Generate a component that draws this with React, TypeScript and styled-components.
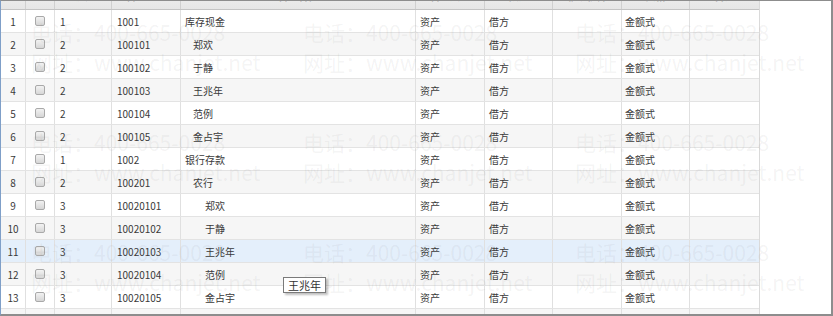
import React from 'react';
import styled, { createGlobalStyle } from 'styled-components';

const GlobalStyle = createGlobalStyle`
  html, body {
    margin: 0;
    padding: 0;
    background: #ffffff;
  }
  body {
    font-family: 'Noto Sans CJK SC', 'Liberation Sans', sans-serif;
  }
`;

/* column widths of the grid, left to right */
const COLUMNS = '25px 29px 57px 69px 235px 69px 68px 69px 68px 69px';

const NAME_INDENT: Record<number, number> = { 1: 4, 2: 12, 3: 24 };

type Account = { level: number; code: string; name: string };

const accounts: Account[] = [
  { level: 1, code: '1001', name: '库存现金' },
  { level: 2, code: '100101', name: '郑欢' },
  { level: 2, code: '100102', name: '于静' },
  { level: 2, code: '100103', name: '王兆年' },
  { level: 2, code: '100104', name: '范例' },
  { level: 2, code: '100105', name: '金占宇' },
  { level: 1, code: '1002', name: '银行存款' },
  { level: 2, code: '100201', name: '农行' },
  { level: 3, code: '10020101', name: '郑欢' },
  { level: 3, code: '10020102', name: '于静' },
  { level: 3, code: '10020103', name: '王兆年' },
  { level: 3, code: '10020104', name: '范例' },
  { level: 3, code: '10020105', name: '金占宇' },
  { level: 2, code: '100202', name: '建行' },
];

const headers = ['序号', '', '级次', '科目编码', '科目名称', '科目类型', '余额方向', '辅助核算', '账页格式', '备注'];

const Frame = styled.div`
  position: relative;
  width: 833px;
  height: 316px;
  box-sizing: border-box;
  border: 1px solid #8d8d8d;
  border-left-color: #7f9fc8;
  border-bottom-width: 2px;
  border-right-width: 2px;
  overflow: hidden;
  background: #ffffff;
`;

/* the grid is scrolled a little, so only the bottom of the header shows */
const Grid = styled.div`
  width: 758px;
  margin-top: -14px;
  border-right: 1px solid #dadada;
`;

const Row = styled.div<{ $tone: 'plain' | 'stripe' | 'hover' }>`
  display: grid;
  grid-template-columns: ${COLUMNS};
  height: 23px;
  box-sizing: border-box;
  border-bottom: 1px solid #e3e3e3;
  background: ${({ $tone }) =>
    $tone === 'hover' ? '#e4effb' : $tone === 'stripe' ? '#f6f6f6' : '#ffffff'};
`;

const HeaderRow = styled(Row)`
  background: linear-gradient(#f2f2f2, #e6e6e6);
  border-bottom: 1px solid #c4c4c4;
`;

const Cell = styled.div<{ $align?: 'left' | 'center'; $pad?: number }>`
  display: flex;
  align-items: center;
  justify-content: ${({ $align }) => ($align === 'center' ? 'center' : 'flex-start')};
  padding-left: ${({ $pad }) => $pad ?? 0}px;
  border-right: 1px solid #e0e0e0;
  font-size: 10px;
  color: #3a3a3a;
  white-space: nowrap;
  overflow: hidden;
  &:last-child {
    border-right: none;
  }
`;

const HeaderCell = styled(Cell)`
  justify-content: center;
  padding-left: 0;
  padding-bottom: 6px;
  font-weight: bold;
  color: #2a2a2a;
  border-right-color: #d0d0d0;
`;

const Check = styled.span`
  display: block;
  width: 10px;
  height: 10px;
  box-sizing: border-box;
  border: 1px solid #a9a9a9;
  border-radius: 2px;
  background: linear-gradient(#f2f2f2, #d6d6d6);
`;

const Watermark = styled.div`
  position: absolute;
  inset: 0;
  display: grid;
  grid-template-columns: repeat(3, 272px);
  grid-auto-rows: 110px;
  padding: 16px 0 0 30px;
  pointer-events: none;
`;

const MarkLine = styled.div`
  height: 30px;
  line-height: 30px;
  font-size: 21px;
  color: rgba(110, 110, 110, 0.08);
  white-space: nowrap;
`;

const Tooltip = styled.div`
  position: absolute;
  left: 282px;
  top: 276px;
  height: 16px;
  padding: 0 4px;
  box-sizing: border-box;
  border: 1px solid #7a7a7a;
  background: #ffffff;
  box-shadow: 2px 2px 2px rgba(0, 0, 0, 0.25);
  font-size: 11px;
  line-height: 14px;
  color: #333333;
`;

const App: React.FC = () => {
  return (
    <>
      <GlobalStyle />
      <Frame>
        <Grid>
          <HeaderRow $tone="plain">
            {headers.map((h, i) => (
              <HeaderCell key={i}>{i === 1 ? <Check /> : h}</HeaderCell>
            ))}
          </HeaderRow>
          {accounts.map((a, i) => {
            const tone = i === 10 ? 'hover' : i % 2 === 1 ? 'stripe' : 'plain';
            return (
              <Row key={i} $tone={tone}>
                <Cell $align="center">{i + 1}</Cell>
                <Cell $align="center">
                  <Check />
                </Cell>
                <Cell $pad={5}>{a.level}</Cell>
                <Cell $pad={5}>{a.code}</Cell>
                <Cell $pad={NAME_INDENT[a.level]}>{a.name}</Cell>
                <Cell $pad={4}>资产</Cell>
                <Cell $pad={4}>借方</Cell>
                <Cell />
                <Cell $pad={3}>金额式</Cell>
                <Cell />
              </Row>
            );
          })}
        </Grid>
        <Watermark>
          {Array.from({ length: 9 }).map((_, i) => (
            <div key={i}>
              <MarkLine>电话：400-665-0028</MarkLine>
              <MarkLine>网址：www.chanjet.net</MarkLine>
            </div>
          ))}
        </Watermark>
        <Tooltip>王兆年</Tooltip>
      </Frame>
    </>
  );
};

export default App;
